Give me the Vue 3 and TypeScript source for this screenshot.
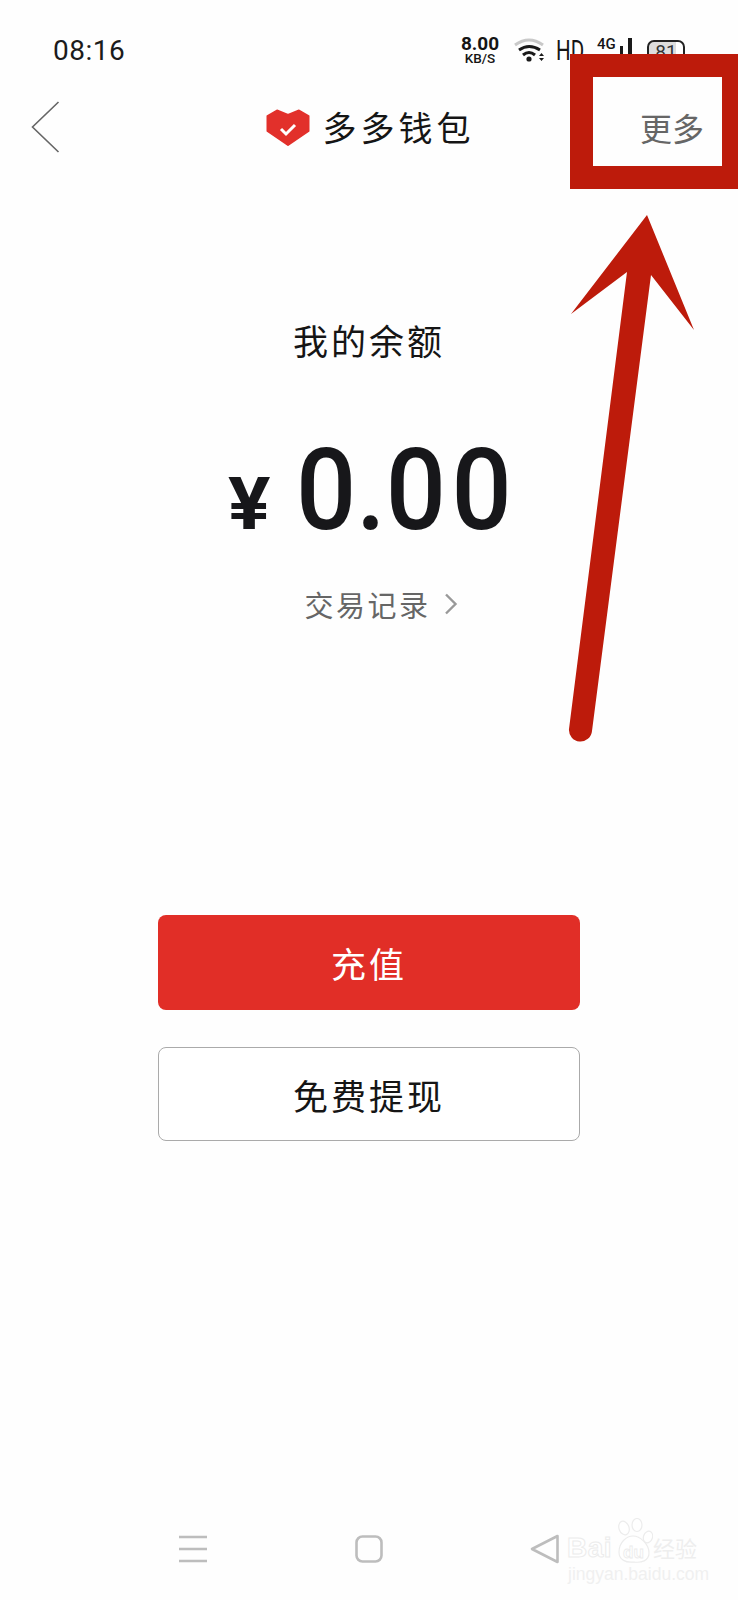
<script setup lang="ts">
const title: string = '多多钱包'
</script>

<template>
  <div class="page">
    <div class="status">
      <span class="time">08:16</span>
      <div class="indicators">
        <div class="speed"><span class="speed-value">8.00</span><span class="speed-unit">KB/S</span></div>
        <svg class="wifi" width="32" height="26" viewBox="0 0 32 26" aria-hidden="true">
          <path d="M1 7 Q15 -3 29 7" fill="none" stroke="#c9c9c9" stroke-width="3" />
          <path d="M5 12 Q15 5 26 12" fill="none" stroke="#1a1a1a" stroke-width="3" />
          <path d="M9 17 Q15 12 21 17" fill="none" stroke="#1a1a1a" stroke-width="3" />
          <circle cx="15" cy="21" r="2.6" fill="#1a1a1a" />
          <path d="M25 18 L27.5 15 L30 18 Z M25 20 L27.5 23 L30 20 Z" fill="#1a1a1a" />
        </svg>
        <span class="hd">HD</span>
        <span class="net">4G</span>
        <div class="bars"><i class="bar-low"></i><i class="bar-high"></i></div>
        <div class="battery">81</div>
      </div>
    </div>

    <div class="nav">
      <svg class="back" width="29" height="52" viewBox="0 0 29 52" aria-hidden="true">
        <path d="M27.5 1 L1.5 26 L27.5 51" fill="none" stroke="#666" stroke-width="1.6" />
      </svg>
      <div class="brand">
        <svg class="heart" width="44" height="38" viewBox="0 0 44 38" aria-hidden="true">
          <path d="M1.5 7 L11 1.5 L22 6 L33 1.5 L42.5 7 L42.5 22 L22 36 L1.5 22 Z" fill="#e2302b" stroke="#e2302b" stroke-width="2" stroke-linejoin="round" />
          <path d="M15 20 L20 25 L29 16" fill="none" stroke="#fff" stroke-width="3" />
        </svg>
        <span class="brand-name">{{ title }}</span>
      </div>
      <span class="more">更多</span>
    </div>

    <main class="wallet">
      <div class="balance-label">我的余额</div>
      <div class="amount">
        <span class="currency">¥</span>
        <span class="value"><span class="tight">0.</span><span class="wide">00</span></span>
      </div>
      <div class="records">
        <span>交易记录</span>
        <svg width="14" height="22" viewBox="0 0 14 22" aria-hidden="true">
          <path d="M2 1.5 L11.5 11 L2 20.5" fill="none" stroke="#999" stroke-width="2.4" />
        </svg>
      </div>
      <div class="actions">
        <button class="btn primary">充值</button>
        <button class="btn secondary">免费提现</button>
      </div>
    </main>

    <div class="softkeys">
      <div class="softkey">
        <svg width="30" height="28" viewBox="0 0 30 28" aria-hidden="true">
          <path d="M1 2 H29 M1 14 H29 M1 26 H29" stroke="#bdbdbd" stroke-width="2.4" />
        </svg>
      </div>
      <div class="softkey">
        <svg width="30" height="28" viewBox="0 0 30 28" aria-hidden="true">
          <rect x="2.5" y="1.5" width="25" height="25" rx="6" fill="none" stroke="#bdbdbd" stroke-width="2.6" />
        </svg>
      </div>
      <div class="softkey">
        <svg width="30" height="30" viewBox="0 0 30 30" aria-hidden="true">
          <path d="M27.5 2 L2 15 L27.5 28 Z" fill="none" stroke="#bdbdbd" stroke-width="2.6" stroke-linejoin="round" />
        </svg>
      </div>
    </div>

    <div class="watermark">
      <span class="wm-bai">Bai</span>
      <svg class="wm-paw" width="38" height="48" viewBox="0 0 38 48" aria-hidden="true">
        <g fill="#fff" stroke="#ececec" stroke-width="1.2">
          <ellipse cx="9" cy="10" rx="5" ry="7" transform="rotate(-20 9 10)" />
          <ellipse cx="22" cy="7" rx="5" ry="6.5" />
          <ellipse cx="33" cy="19" rx="4.5" ry="6" transform="rotate(20 33 19)" />
          <path d="M4 34 C4 24 12 18 18 18 C25 18 34 26 34 35 C34 43 26 45 19 44 C11 45 4 42 4 34 Z" />
        </g>
      </svg>
      <span class="wm-du">du</span>
      <span class="wm-cn">经验</span>
      <span class="wm-url">jingyan.baidu.com</span>
    </div>

    <div class="callout-box"></div>
    <svg class="callout-arrow" width="140" height="530" viewBox="0 0 140 530" aria-hidden="true">
      <path
        d="M89 0 L136 115 L93 60 L34 516 A11.5 11.5 0 0 1 11 514 L69 57 L13 99 Z"
        fill="#bd1b0b"
      />
    </svg>
  </div>
</template>

<style>
html,
body {
  margin: 0;
  background: #fff;
}
</style>

<style scoped>
.page {
  position: relative;
  width: 738px;
  height: 1600px;
  overflow: hidden;
  display: flex;
  flex-direction: column;
  background: #fefefe;
  color: #151515;
  font-family: "Noto Sans CJK SC", "Noto Sans", sans-serif;
}

.status {
  height: 100px;
  box-sizing: border-box;
  padding: 38px 53px 0;
  display: flex;
  justify-content: space-between;
  align-items: flex-start;
}

.time {
  font: 400 28px/26px Roboto, sans-serif;
  letter-spacing: 0.5px;
  color: #1b1b1b;
}

.indicators {
  display: flex;
  align-items: flex-start;
  font-family: Roboto, sans-serif;
}

.speed {
  width: 36px;
  margin-top: -2px;
  display: flex;
  flex-direction: column;
  align-items: center;
}

.speed-value {
  font-size: 19px;
  line-height: 16px;
  font-weight: 700;
}

.speed-unit {
  font-size: 13.5px;
  line-height: 12px;
  font-weight: 500;
}

.wifi {
  margin-left: 16px;
}

.hd {
  width: 26px;
  margin-left: 10px;
  margin-top: 2px;
  font-size: 27px;
  line-height: 22px;
  transform: scaleX(0.76);
  transform-origin: left center;
  white-space: nowrap;
}

.net {
  width: 17px;
  margin-left: 15px;
  font-size: 15px;
  line-height: 12px;
  font-weight: 500;
  white-space: nowrap;
}

.bars {
  margin-left: 6px;
  height: 24px;
  display: flex;
  align-items: flex-end;
  gap: 5px;
}

.bar-low {
  width: 3px;
  height: 16px;
  background: #1a1a1a;
}

.bar-high {
  width: 4px;
  height: 24px;
  background: #1a1a1a;
}

.battery {
  width: 38px;
  height: 24px;
  margin-left: 15px;
  margin-top: 2px;
  box-sizing: border-box;
  border: 2px solid #222;
  border-radius: 7px;
  background: linear-gradient(90deg, #ddd 0 78%, #fff 78%);
  text-align: center;
  font-size: 19px;
  line-height: 20px;
  color: #333;
}

.nav {
  height: 54px;
  display: grid;
  grid-template-columns: 1fr auto 1fr;
  align-items: center;
}

.back {
  margin-left: 31px;
}

.brand {
  display: flex;
  align-items: center;
  gap: 13px;
  margin-left: 2px;
}

.heart {
  margin-top: 2px;
}

.brand-name {
  font-size: 34px;
  line-height: 40px;
  letter-spacing: 4px;
}

.more {
  justify-self: end;
  margin-right: 34px;
  font-size: 32px;
  line-height: 40px;
  color: #666;
}

.wallet {
  flex: 1;
  display: flex;
  flex-direction: column;
  align-items: center;
  padding-top: 166px;
}

.balance-label {
  font-size: 35px;
  line-height: 40px;
  letter-spacing: 3px;
}

.amount {
  width: 300px;
  height: 120px;
  margin-top: 70px;
  display: flex;
  align-items: baseline;
  justify-content: center;
  gap: 27px;
  font-family: Roboto, sans-serif;
  color: #17171a;
}

.currency {
  font-size: 72px;
  line-height: 120px;
  font-weight: 700;
  transform: scaleX(1.1);
}

.value {
  width: 212px;
  font-size: 114px;
  line-height: 120px;
  font-weight: 500;
  white-space: nowrap;
  transform: scaleX(0.93);
  transform-origin: left center;
}

.tight {
  letter-spacing: 0;
}

.wide {
  letter-spacing: 6px;
}

.records {
  margin-top: 36px;
  margin-left: 24px;
  display: flex;
  align-items: center;
  gap: 13px;
  font-size: 29px;
  line-height: 36px;
  letter-spacing: 2.5px;
  color: #666;
}

.actions {
  width: 422px;
  margin-top: 293px;
  display: flex;
  flex-direction: column;
  gap: 37px;
}

.btn {
  height: 94px;
  box-sizing: border-box;
  border-radius: 8px;
  padding: 0;
  font-family: inherit;
  font-size: 35px;
  letter-spacing: 3px;
}

.primary {
  height: 95px;
  border: 0;
  background: #e12e27;
  color: #fff;
}

.secondary {
  border: 1px solid #aaa;
  background: #fff;
  color: #151515;
}

.softkeys {
  position: relative;
  margin-bottom: 36px;
  display: flex;
  justify-content: center;
  gap: 146px;
  align-items: center;
}

.softkey {
  width: 30px;
  height: 30px;
  display: flex;
  align-items: center;
  justify-content: center;
}

.watermark {
  position: absolute;
  left: 566px;
  top: 1518px;
  width: 140px;
  height: 68px;
  color: #fff;
}

.wm-bai,
.wm-du,
.wm-cn,
.wm-url {
  position: absolute;
  white-space: nowrap;
}

.wm-bai {
  left: 1px;
  top: 14px;
  font: 700 28px/32px "Liberation Sans", sans-serif;
  letter-spacing: 0.5px;
  -webkit-text-stroke: 1px #ececec;
}

.wm-paw {
  position: absolute;
  left: 49px;
  top: 0;
}

.wm-du {
  left: 57px;
  top: 25px;
  font: 700 17px/20px "Liberation Sans", sans-serif;
  -webkit-text-stroke: 0.8px #ececec;
}

.wm-cn {
  left: 87px;
  top: 16px;
  font-size: 22px;
  line-height: 26px;
  color: #eeeeee;
}

.wm-url {
  left: 2px;
  top: 46px;
  font: 400 17.5px/20px "Liberation Sans", sans-serif;
  color: #f0f0f0;
}

.callout-box {
  position: absolute;
  left: 570px;
  top: 54px;
  width: 168px;
  height: 135px;
  box-sizing: border-box;
  border-style: solid;
  border-color: #bd1b0b;
  border-width: 23px 16px 23px 23px;
}

.callout-arrow {
  position: absolute;
  left: 558px;
  top: 215px;
}
</style>
